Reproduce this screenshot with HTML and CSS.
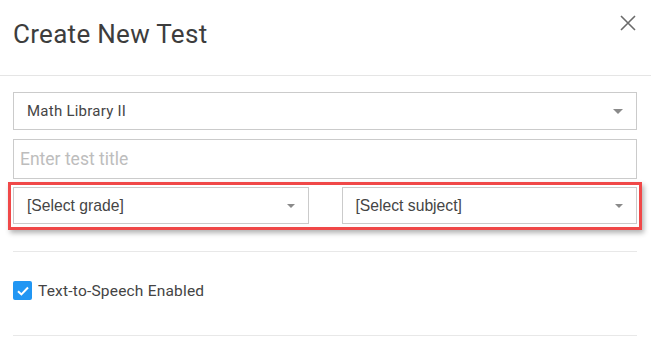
FILE: index.html
```html
<!DOCTYPE html>
<html>
<head>
<meta charset="utf-8">
<link rel="stylesheet" href="styles.css">
</head>
<body>
<div class="modal">
  <div class="header">
    <h1 class="title">Create New Test</h1>
    <button class="close" aria-label="Close">
      <svg width="16" height="16" viewBox="0 0 16 16"><path d="M1 1L15 15M15 1L1 15" stroke="#6b6b6b" stroke-width="1.6" fill="none"/></svg>
    </button>
  </div>
  <div class="body">
    <div class="select lib">
      <span class="value">Math Library II</span>
      <span class="caret"></span>
    </div>
    <div class="input">Enter test title</div>
    <div class="highlight">
      <div class="select small">
        <span class="value">[Select grade]</span>
        <span class="caret sm"></span>
      </div>
      <div class="select small">
        <span class="value">[Select subject]</span>
        <span class="caret sm"></span>
      </div>
    </div>
    <div class="divider first"></div>
    <label class="check">
      <span class="box">
        <svg width="12" height="10" viewBox="0 0 12 10"><path d="M1 5.2L4.4 8.4L11 1.5" stroke="#fff" stroke-width="2" fill="none"/></svg>
      </span>
      <span class="label">Text-to-Speech Enabled</span>
    </label>
    <div class="divider last"></div>
  </div>
</div>
</body>
</html>
```

FILE: styles.css
```css
* { box-sizing: border-box; }
html, body { margin: 0; padding: 0; background: #fff; }
body { font-family: Roboto, "Liberation Sans", Arial, sans-serif; color: #444; }
.modal { width: 651px; height: 339px; overflow: hidden; }
.header {
  height: 76px;
  border-bottom: 1px solid #e5e5e5;
  display: flex;
  justify-content: space-between;
  align-items: flex-start;
  padding: 0 15px 0 13px;
}
.title {
  margin: 19px 0 0 0;
  font-size: 26px;
  font-weight: 400;
  letter-spacing: 0.3px;
  color: #3d3d3d;
  line-height: 30px;
}
.close {
  margin-top: 15px;
  width: 16px; height: 16px;
  padding: 0; border: 0; background: none;
  display: flex;
}
.body { padding: 16px 14px 0 13px; }
.select {
  border: 1px solid #cbcbcb;
  display: flex;
  align-items: center;
  justify-content: space-between;
  background: #fff;
}
.lib {
  height: 38px;
  padding: 0 13px 0 13px;
  font-size: 15px;
  letter-spacing: 0.25px;
  color: #454545;
}
.caret {
  width: 0; height: 0;
  border-left: 5px solid transparent;
  border-right: 5px solid transparent;
  border-top: 5px solid #8a8a8a;
}
.caret.sm {
  border-left-width: 4px; border-right-width: 4px; border-top-width: 4px;
}
.input {
  margin-top: 9px;
  height: 40px;
  border: 1px solid #cbcbcb;
  display: flex; align-items: center;
  padding: 0 6px;
  font-size: 17.5px;
  color: #bdbdbd;
}
.highlight {
  margin: 3px -5px 0 -5px;
  border: 3px solid #f04848;
  padding: 2px 2px 3px 2px;
  display: flex;
  gap: 33px;
  box-shadow: 2px 3px 5px rgba(0,0,0,0.3);
}
.small {
  flex: 1;
  height: 37px;
  padding: 0 13px 0 13px;
  font-size: 15.7px;
  font-family: "Liberation Sans", Arial, sans-serif;
  color: #454545;
}
.divider { height: 1px; background: #e8e8e8; }
.divider.first { margin-top: 21px; }
.check {
  display: flex;
  align-items: center;
  gap: 6px;
  margin-top: 29px;
  height: 19px;
}
.box {
  width: 19px; height: 19px;
  border-radius: 2px;
  background: #2196f3;
  display: flex; align-items: center; justify-content: center;
}
.label { font-size: 15.5px; letter-spacing: 0.2px; color: #444; }
.divider.last { margin-top: 35px; }
```
